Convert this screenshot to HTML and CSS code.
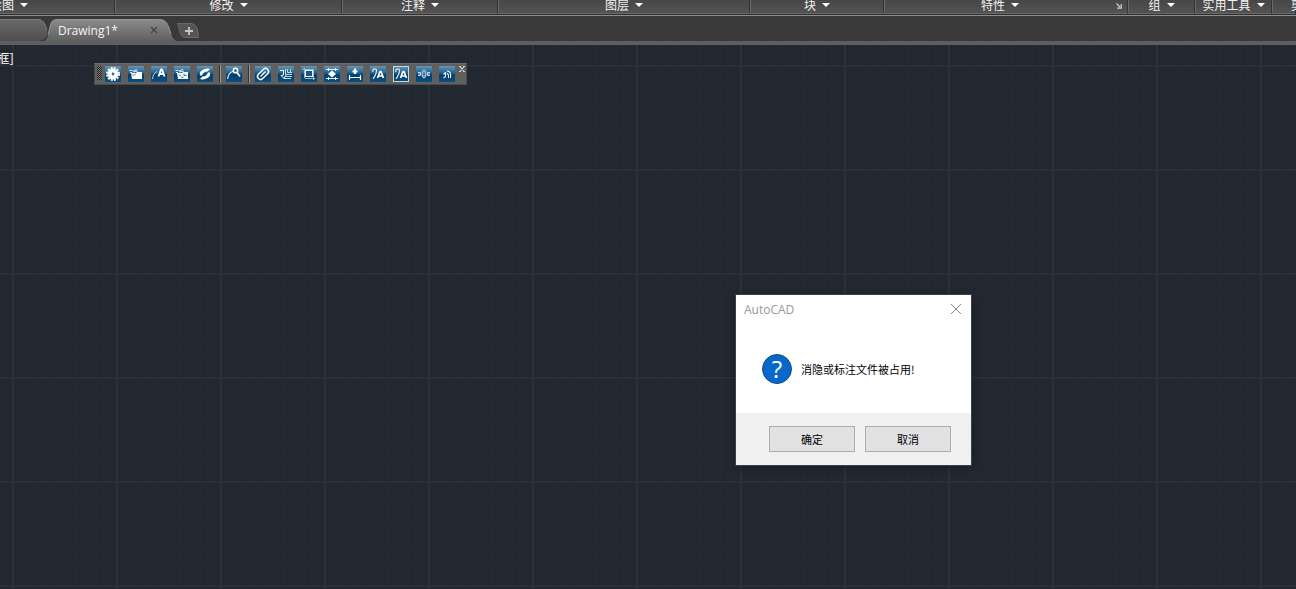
FILE: index.html
```html
<!DOCTYPE html>
<html lang="zh-CN">
<head>
    <meta charset="UTF-8">
    <meta name="viewport" content="width=device-width, initial-scale=1.0">
    <title>Drawing1</title>
    <link rel="stylesheet" href="styles.css">
</head>
<body>
    <!-- ribbon panel titles -->
    <div class="ribbon">
        <div class="panel panel-draw"><button>绘图</button></div>
        <div class="panel"><button>修改</button></div>
        <div class="panel"><button>注释</button></div>
        <div class="panel"><button>图层</button></div>
        <div class="panel"><button>块</button></div>
        <div class="panel panel-props">
            <button>特性</button>
            <svg class="launcher" width="6" height="6" viewBox="0 0 6 6"><path d="M0.5 0.5L4 4M5.2 1V5.2H1" fill="none" stroke="#d0d0d0" stroke-width="1.2"/></svg>
        </div>
        <div class="panel"><button>组</button></div>
        <div class="panel"><button>实用工具</button></div>
        <div class="panel panel-clip"><button>剪</button></div>
    </div>

    <!-- file tabs -->
    <div class="tabs">
        <div class="tab-prev">
            <svg width="50" height="22" viewBox="0 0 50 22">
                <defs>
                    <linearGradient id="prevFill" x1="0" y1="0" x2="0" y2="1">
                        <stop offset="0" stop-color="#6a6a6a"/>
                        <stop offset="1" stop-color="#4f4f4f"/>
                    </linearGradient>
                </defs>
                <path d="M0 0H37C44 0 45 5 47 11C48 17 46 21 38 22H0Z" fill="url(#prevFill)"/>
                <path d="M0 0.5H37C44 0.5 45 5 47 11" fill="none" stroke="#7c7c7c"/>
            </svg>
        </div>
        <div class="tab">
            <svg class="tab-shape" width="140" height="23" viewBox="0 0 140 23">
                <defs>
                    <linearGradient id="tabFill" x1="0" y1="0" x2="0" y2="1">
                        <stop offset="0" stop-color="#8c8c8c"/>
                        <stop offset="1" stop-color="#5e5e5e"/>
                    </linearGradient>
                </defs>
                <path d="M0 23C6 22 6 16 8 8C9 2 11 0 17 0H115C123 0 125 3 127 9C130 18 131 22 138 23Z" fill="url(#tabFill)"/>
                <path d="M6 16L8 8C9 2 11 0.5 17 0.5H115C123 0.5 125 3 127 9L129 15" fill="none" stroke="#949494"/>
            </svg>
            <a href="#" class="tab-name">Drawing1*</a>
            <button class="tab-close" aria-label="关闭">
                <svg width="8" height="8" viewBox="0 0 8 8"><path d="M1 1L7 7M7 1L1 7" stroke="#4a4a4a" stroke-width="1.6"/></svg>
            </button>
        </div>
        <button class="tab-new" aria-label="新图形">
            <svg width="24" height="15" viewBox="0 0 24 15">
                <path d="M1 0.5H14C20 0.5 22 5 22.5 14.5H10C4 14.5 4 8 3 5C2.5 3 2 1 1 0.5Z" fill="#555" stroke="#696969"/>
                <path d="M13 4V12M9 8H17" stroke="#c4c4c4" stroke-width="1.8"/>
            </svg>
        </button>
    </div>

    <main class="canvas">
        <div class="view-label">框]</div>

        <div class="toolbar">
            <span class="grip"></span>
            <div class="tools">
                <button class="tool" aria-label="设置"><svg viewBox="0 0 16 16">
                    <circle cx="8" cy="8" r="5.4" fill="#fff"/>
                    <circle cx="8" cy="8" r="6" fill="none" stroke="#fff" stroke-width="2" stroke-dasharray="2 1.14"/>
                    <circle cx="8" cy="8" r="1.4" fill="#2f6d96"/>
                </svg></button>
                <button class="tool" aria-label="图库"><svg viewBox="0 0 16 16">
                    <path d="M3 7H8L9 6H14V13H4Z" fill="#fff"/>
                    <path d="M1.5 4.5H4M2 6.5H4M4.5 5L9 3.5M5 6L10 5" stroke="#dfe9f0" fill="none"/>
                    <path d="M3.5 8L5 9.5L8 8" stroke="#7699b1" fill="none"/>
                </svg></button>
                <button class="tool" aria-label="引线文字"><svg viewBox="0 0 16 16">
                    <path d="M1.5 13C2 9 3 7 6 5.5" stroke="#bdd0dd" fill="none"/>
                    <path d="M7.5 10.5L10 3.5H11L13.5 10.5M9 8H12" stroke="#fff" stroke-width="1.9" stroke-linejoin="round" fill="none"/>
                </svg></button>
                <button class="tool" aria-label="图库编辑"><svg viewBox="0 0 16 16">
                    <path d="M3 7H8L9 6H14V13H4Z" fill="#f2f6f9"/>
                    <path d="M1.5 4.5H4M2 6.5H4M4.5 5L9 3.5M5 6L10 5" stroke="#dfe9f0" fill="none"/>
                    <path d="M5 8.5L7 10.5M10 7.5V9.5H12.5M7.5 12L9.5 11" stroke="#3d7197" fill="none"/>
                </svg></button>
                <button class="tool" aria-label="刷新"><svg viewBox="0 0 16 16">
                    <path d="M3 9.5C2 5.5 5 3 11 2.5L13 3L10.5 5.5C7.5 5.5 6 7 5 9.5Z" fill="#fff"/>
                    <path d="M13 6.5C14 10.5 11 13 5 13.5L3 13L5.5 10.5C8.5 10.5 10 9 11 6.5Z" fill="#fff"/>
                </svg></button>
                <span class="divider"></span>
                <button class="tool" aria-label="查找"><svg viewBox="0 0 16 16">
                    <path d="M1.5 13C2 9 3 6.5 7.5 5" stroke="#d5e1e9" stroke-width="1.2" fill="none"/>
                    <circle cx="9.5" cy="4.5" r="2.2" fill="#376f95" stroke="#fff" stroke-width="1.4"/>
                    <path d="M11 6.5L14 10.5" stroke="#fff" stroke-width="1.7"/>
                </svg></button>
                <span class="divider"></span>
                <button class="tool" aria-label="附着"><svg viewBox="0 0 16 16">
                    <rect x="1.5" y="5" width="13" height="6" rx="3" transform="rotate(-45 8 8)" stroke="#fff" stroke-width="1.4" fill="none"/>
                    <path d="M5.5 10.5L10.5 5.5" stroke="#fff" stroke-width="1.5"/>
                </svg></button>
                <button class="tool" aria-label="多重引线"><svg viewBox="0 0 16 16">
                    <path d="M7.5 3V8.5H14M9.5 3V6.5H14M12.5 3V6.5M8 10.5H14M6 12.5H13" stroke="#c5d6e1" fill="none"/>
                    <path d="M2 4.5H5.5V9L3 9.500L6 12.5L8 9" stroke="#fff" fill="none"/>
                </svg></button>
                <button class="tool" aria-label="边框"><svg viewBox="0 0 16 16">
                    <rect x="4.5" y="4.5" width="7" height="6" fill="#175681" stroke="#e9f1f6"/>
                    <path d="M2 3.5H13M3.5 2V12M12.5 4V14M4 12.5H14" stroke="#9dbacb" fill="none"/>
                </svg></button>
                <button class="tool" aria-label="纵向对齐"><svg viewBox="0 0 16 16">
                    <path d="M2 3.5H14M2 12.5H14M4.5 2V5M11.5 2V5M4.5 11V14M11.5 11V14" stroke="#e9f1f6" fill="none"/>
                    <path d="M4 8L8 4.5L12 8L8 11.5Z" fill="#fff"/>
                </svg></button>
                <button class="tool" aria-label="间距"><svg viewBox="0 0 16 16">
                    <path d="M8 2.5V8M5.5 5.5H10.5" stroke="#fff" stroke-width="2.2"/>
                    <path d="M2 11.5H14M2.5 9V14M13.5 9V14" stroke="#fff" stroke-width="1.2" fill="none"/>
                </svg></button>
                <button class="tool" aria-label="标注文字"><svg viewBox="0 0 16 16">
                    <path d="M3 6C1.5 3 6 2 6.5 4C7 7 5 10 3 13" stroke="#dce7ee" stroke-width="1.2" fill="none"/>
                    <path d="M7.5 12L10 5.5H11L13.5 12M9 10H12" stroke="#fff" stroke-width="1.7" stroke-linejoin="round" fill="none"/>
                </svg></button>
                <button class="tool" aria-label="框选标注文字"><svg viewBox="0 0 16 16">
                    <rect x="0.5" y="0.5" width="15" height="15" stroke="#c4d8e5" fill="none"/>
                    <path d="M3 6C1.5 3 6 2 6.5 4C7 7 5 10 3 13" stroke="#dce7ee" stroke-width="1.2" fill="none"/>
                    <path d="M7.5 12L10 5.5H11L13.5 12M9 10H12" stroke="#fff" stroke-width="1.7" stroke-linejoin="round" fill="none"/>
                </svg></button>
                <button class="tool" aria-label="横向对齐"><svg viewBox="0 0 16 16">
                    <path d="M2 6.5H4.5V9.500H2M2 8H4M14 6.5H11.5V9.500H14M12 8H14" stroke="#c5d6e1" fill="none"/>
                    <ellipse cx="8" cy="8" rx="2" ry="4" fill="#5c8cab" stroke="#c5d6e1"/>
                    <path d="M7 8H9" stroke="#235e87"/>
                </svg></button>
                <button class="tool" aria-label="关于"><svg viewBox="0 0 16 16">
                    <path d="M6.5 6V11M4.5 8.5L6.5 6.5M4.5 12L6.5 10.5M8 5C11.5 5 12 8 11.5 12M8 7.5L9.5 9V12" stroke="#e9f1f6" stroke-width="1.1" fill="none"/>
                </svg></button>
            </div>
            <button class="toolbar-close" aria-label="关闭工具栏">
                <svg width="6" height="6" viewBox="0 0 6 6"><path d="M0 0.5H2M4 0.5H6M0 5.5H2M4 5.5H6M1 0.5L5 5.5M5 0.5L1 5.5" stroke="#d2d2d2" stroke-width="1.2"/></svg>
            </button>
        </div>

        <div class="dialog" role="dialog" aria-labelledby="dialog-title">
            <div class="dialog-head">
                <span id="dialog-title">AutoCAD</span>
                <button class="dialog-close" aria-label="关闭">
                    <svg width="12" height="12" viewBox="0 0 12 12"><path d="M1 1L11 11M11 1L1 11" stroke="#858585"/></svg>
                </button>
            </div>
            <div class="dialog-body">
                <span class="question">?</span>
                <span>消隐或标注文件被占用!</span>
            </div>
            <div class="dialog-foot">
                <button>确定</button>
                <button>取消</button>
            </div>
        </div>
    </main>
</body>
</html>
```
FILE: styles.css
```css
* {
    box-sizing: border-box;
}
body {
    margin: 0;
    min-height: 100vh;
    display: flex;
    flex-direction: column;
    overflow: hidden;
    background: #393939;
    font-family: "Open Sans", "Noto Sans CJK SC", sans-serif;
    font-size: 12px;
}
button {
    margin: 0;
    padding: 0;
    border: none;
    background: none;
    font: inherit;
    color: inherit;
    cursor: pointer;
}
svg {
    display: block;
}

/* ribbon */
.ribbon {
    display: grid;
    grid-template-columns:
        minmax(0, 115fr) minmax(0, 227fr) minmax(0, 156fr)
        minmax(0, 252fr) minmax(0, 134fr) minmax(0, 244fr)
        minmax(0, 67fr) minmax(0, 77fr) minmax(0, 24fr);
    grid-template-rows: 14px;
    height: 16px;
    border-bottom: 1px solid #8d8d8d;
    background: #303030;
}
.panel {
    position: relative;
    display: flex;
    justify-content: center;
    align-items: center;
    padding-bottom: 3px;
    background: linear-gradient(#474747, #535353);
    border-bottom: 1px solid #686868;
    border-left: 1px solid #686868;
    border-right: 1px solid #333;
}
.panel button {
    display: flex;
    align-items: center;
    gap: 6px;
    line-height: 18px;
    color: #f2f2f2;
    white-space: nowrap;
    font-family: "Noto Sans CJK SC", sans-serif;
}
.panel button::after {
    content: "";
    border: 4px solid transparent;
    border-top-color: #fff;
    border-bottom: none;
}
.panel-draw {
    justify-content: flex-start;
    border-left: none;
}
.panel-draw button {
    margin-left: -10px;
}
.panel-props {
    padding-right: 12px;
}
.panel-clip {
    justify-content: flex-start;
    padding-left: 18px;
}
.launcher {
    position: absolute;
    right: 5px;
    top: 3px;
}

/* file tabs */
.tabs {
    display: flex;
    align-items: flex-start;
    height: 29px;
    padding-top: 3px;
    border-bottom: 4px solid #5e5e5e;
}
.tab-prev {
    width: 42px;
}
.tab {
    position: relative;
    display: flex;
    align-items: center;
    justify-content: space-between;
    width: 134px;
    height: 22px;
    padding: 0 18px 0 16px;
}
.tab-shape {
    position: absolute;
    left: 0;
    top: 0;
}
.tab-name {
    position: relative;
    color: #f4f4f4;
    text-decoration: none;
    line-height: 22px;
    padding-top: 2px;
}
.tab-close {
    position: relative;
}
.tab-new {
    position: relative;
    margin-top: 4px;
}

/* model space, 104px major grid */
.canvas {
    position: relative;
    flex: 1;
    background-color: #212830;
    background-image:
        linear-gradient(90deg, #2b303d 2px, transparent 2px),
        linear-gradient(#2b303b 1px, #262c36 1px 2px, transparent 2px),
        linear-gradient(90deg, transparent 21px, #252b36 21px 22px, transparent 22px 42px, #252b36 42px 43px, transparent 43px 63px, #252b36 63px 64px, transparent 64px 84px, #252b36 84px 85px, transparent 85px),
        linear-gradient(transparent 21px, #252b36 21px 22px, transparent 22px 42px, #252b36 42px 43px, transparent 43px 63px, #252b36 63px 64px, transparent 64px 84px, #252b36 84px 85px, transparent 85px);
    background-size: 104px 104px;
    background-position: 12px 20px;
}
.view-label {
    display: flex;
    justify-content: flex-end;
    width: 14px;
    padding-top: 3px;
    color: #fff;
    font-size: 13px;
    line-height: 20px;
    white-space: nowrap;
    font-family: "Noto Sans CJK SC", sans-serif;
}

.toolbar {
    position: absolute;
    left: 94px;
    top: 18px;
    display: flex;
    align-items: flex-start;
    height: 22px;
    padding: 2px 1px 2px 2px;
    background: #5f5f5f;
    border: 1px solid #4c4c4c;
    border-top-color: #6b6b6b;
}
.grip {
    width: 5px;
    height: 14px;
    margin-right: 3px;
    background: repeating-conic-gradient(#222 0 25%, #777 0 50%) 0 0 / 2px 2px;
}
.tools {
    display: flex;
    gap: 7px;
}
.tool {
    width: 16px;
    height: 16px;
    background: linear-gradient(#6696b8, #205f8b 45%, #003f6d 55%, #0b5080);
}
.tool svg {
    width: 16px;
    height: 16px;
}
.divider {
    width: 1px;
    height: 18px;
    margin: -1px -2px 0 0;
    background: #999;
    box-shadow: -1px 0 #333;
}
.toolbar-close {
    margin-left: 4px;
}

/* message box */
.dialog {
    position: absolute;
    left: 736px;
    top: 250px;
    width: 235px;
    background: #fff;
    color: #000;
    font-size: 11px;
    font-family: "Noto Sans CJK SC", sans-serif;
    box-shadow: 0 0 0 1px #3c4047, 0 2px 8px rgba(0, 0, 0, 0.4);
}
.dialog-head {
    display: flex;
    justify-content: space-between;
    align-items: center;
    height: 28px;
    padding: 0 9px 0 8px;
    color: #999;
    font-size: 12px;
    font-family: "Open Sans", sans-serif;
}
.dialog-body {
    display: flex;
    align-items: center;
    gap: 9px;
    height: 90px;
    padding: 2px 26px 0;
    white-space: nowrap;
}
.question {
    width: 30px;
    height: 30px;
    border: 1px solid #174f83;
    border-radius: 50%;
    background: #0669c9;
    color: #fff;
    font-family: "Open Sans", sans-serif;
    font-size: 24px;
    line-height: 28px;
    text-align: center;
}
.dialog-foot {
    display: flex;
    justify-content: flex-end;
    gap: 10px;
    padding: 13px 20px;
    background: #f0f0f0;
}
.dialog-foot button {
    width: 86px;
    height: 26px;
    background: #e1e1e1;
    border: 1px solid #adadad;
}
```
